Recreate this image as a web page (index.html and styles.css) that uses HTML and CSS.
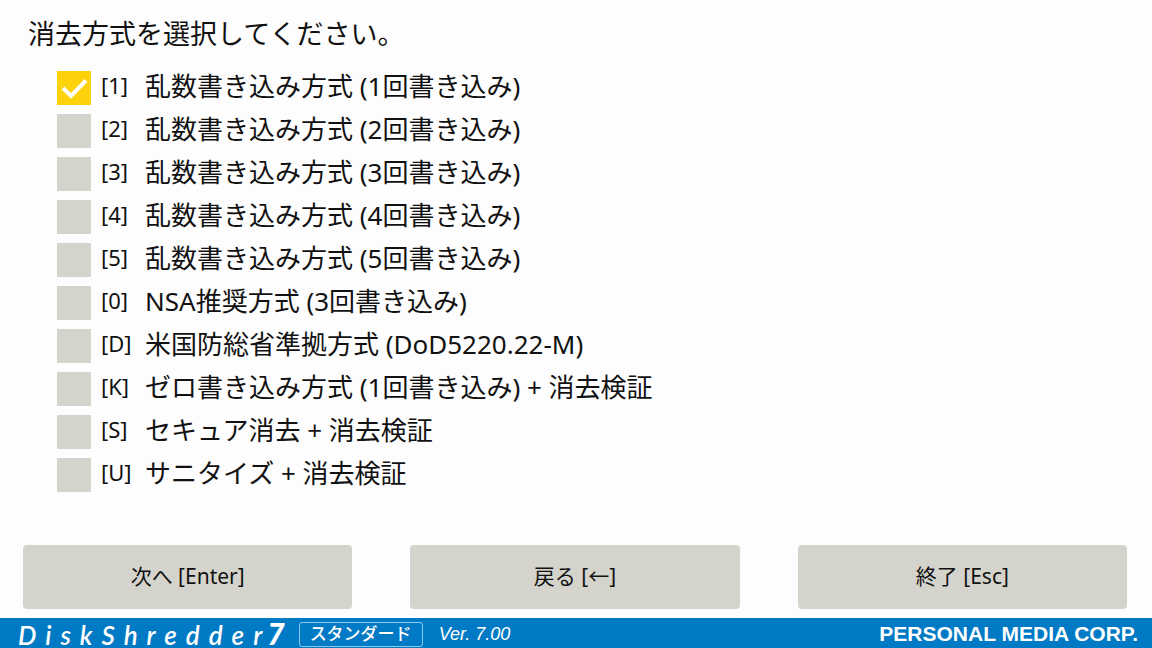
FILE: index.html
```
<!DOCTYPE html>
<html lang="ja">
<head>
  <meta charset="UTF-8">
  <meta name="viewport" content="width=device-width, initial-scale=1.0">
  <title>DiskShredder7</title>
  <link rel="stylesheet" href="styles.css">
</head>
<body>
  <main>
    <h1 id="titulo">消去方式を選択してください。</h1>

    <div class="metodos" role="radiogroup" aria-labelledby="titulo">
      <label><input type="radio" name="metodo" value="1" checked><span class="tecla">[1]</span><span>乱数書き込み方式 (1回書き込み)</span></label>
      <label><input type="radio" name="metodo" value="2"><span class="tecla">[2]</span><span>乱数書き込み方式 (2回書き込み)</span></label>
      <label><input type="radio" name="metodo" value="3"><span class="tecla">[3]</span><span>乱数書き込み方式 (3回書き込み)</span></label>
      <label><input type="radio" name="metodo" value="4"><span class="tecla">[4]</span><span>乱数書き込み方式 (4回書き込み)</span></label>
      <label><input type="radio" name="metodo" value="5"><span class="tecla">[5]</span><span>乱数書き込み方式 (5回書き込み)</span></label>
      <label><input type="radio" name="metodo" value="0"><span class="tecla">[0]</span><span>NSA推奨方式 (3回書き込み)</span></label>
      <label><input type="radio" name="metodo" value="D"><span class="tecla">[D]</span><span>米国防総省準拠方式 (DoD5220.22-M)</span></label>
      <label><input type="radio" name="metodo" value="K"><span class="tecla">[K]</span><span>ゼロ書き込み方式 (1回書き込み) + 消去検証</span></label>
      <label><input type="radio" name="metodo" value="S"><span class="tecla">[S]</span><span>セキュア消去 + 消去検証</span></label>
      <label><input type="radio" name="metodo" value="U"><span class="tecla">[U]</span><span>サニタイズ + 消去検証</span></label>
    </div>
  </main>

  <div class="botones">
    <button type="button">次へ [Enter]</button>
    <button type="button">戻る [←]</button>
    <button type="button">終了 [Esc]</button>
  </div>

  <footer>
    <span class="logo">DiskShredder<b>7</b></span>
    <span class="edicion">スタンダード</span>
    <span class="version">Ver. 7.00</span>
    <span class="empresa">PERSONAL MEDIA CORP.</span>
  </footer>
</body>
</html>
```
FILE: styles.css
```
* {
  box-sizing: border-box;
}

body {
  margin: 0;
  min-height: 100vh;
  display: flex;
  flex-direction: column;
  background-color: #fdfdfd;
  color: #111;
  font-family: "Noto Sans", "Noto Sans CJK JP", sans-serif;
}

main {
  flex: 1;
  padding: 14px 28px 0;
}

h1 {
  margin: 0 0 17px;
  font-size: 27px;
  line-height: 40px;
  font-weight: normal;
}

.metodos {
  display: flex;
  flex-direction: column;
  align-items: flex-start;
  gap: 9px;
  padding-left: 29px;
}

.metodos label {
  display: flex;
  align-items: flex-start;
  height: 34px;
  font-size: 26px;
  line-height: 30px;
  white-space: nowrap;
  cursor: pointer;
}

.metodos input {
  appearance: none;
  width: 34px;
  height: 34px;
  margin: 0 10px 0 0;
  background-color: #d4d4cc;
  cursor: pointer;
}

.metodos input:checked {
  background: #fdd20a url("data:image/svg+xml,%3Csvg xmlns='http://www.w3.org/2000/svg' viewBox='0 0 34 34'%3E%3Cpath d='M6 17l8 8L29 9.500' fill='none' stroke='white' stroke-width='4'/%3E%3C/svg%3E") center / 34px 34px no-repeat;
}

.metodos .tecla {
  width: 44px;
  font-size: 22px;
  line-height: 28px;
}

.botones {
  display: grid;
  grid-template-columns: repeat(3, 1fr);
  gap: 58px;
  padding: 16px 25px 9px 23px;
}

.botones button {
  height: 64px;
  padding: 0 0 5px;
  border: none;
  border-radius: 4px;
  background-color: #d4d4cc;
  color: #111;
  font-family: inherit;
  font-size: 21px;
  cursor: pointer;
}

.botones button:hover {
  background-color: #c6c6bd;
}

footer {
  display: flex;
  align-items: center;
  height: 30px;
  padding: 2px 14px 0 18px;
  background-color: #007ac4;
  color: white;
  font-family: "Liberation Sans", "Noto Sans CJK JP", sans-serif;
}

.logo {
  display: flex;
  align-items: baseline;
  font-family: Lato, sans-serif;
  font-size: 26px;
  line-height: 26px;
  font-style: italic;
  font-weight: 600;
  letter-spacing: 9px;
}

.logo b {
  margin-left: -4px;
  font-size: 30px;
  letter-spacing: 0;
}

.edicion {
  margin-left: 14px;
  padding: 0 10px;
  border: 1px solid #8cc8ee;
  border-radius: 3px;
  font-size: 17px;
  line-height: 23px;
  font-weight: 500;
}

.version {
  margin-left: 16px;
  font-size: 18px;
  font-style: italic;
}

.empresa {
  margin-left: auto;
  font-size: 21px;
  font-weight: bold;
}
```
